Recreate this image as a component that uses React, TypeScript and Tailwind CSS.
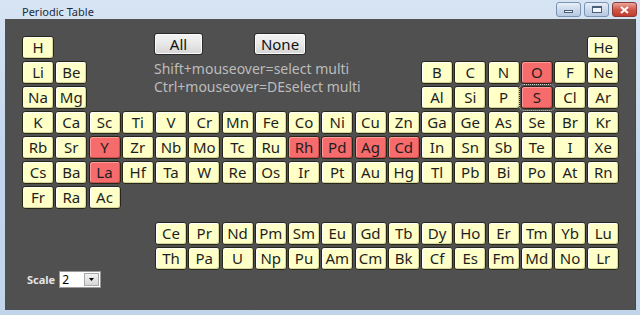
import React from "react";

const MAIN: (string | null)[][] = [
  ["H", null, null, null, null, null, null, null, null, null, null, null, null, null, null, null, null, "He"],
  ["Li", "Be", null, null, null, null, null, null, null, null, null, null, "B", "C", "N", "O", "F", "Ne"],
  ["Na", "Mg", null, null, null, null, null, null, null, null, null, null, "Al", "Si", "P", "S", "Cl", "Ar"],
  ["K", "Ca", "Sc", "Ti", "V", "Cr", "Mn", "Fe", "Co", "Ni", "Cu", "Zn", "Ga", "Ge", "As", "Se", "Br", "Kr"],
  ["Rb", "Sr", "Y", "Zr", "Nb", "Mo", "Tc", "Ru", "Rh", "Pd", "Ag", "Cd", "In", "Sn", "Sb", "Te", "I", "Xe"],
  ["Cs", "Ba", "La", "Hf", "Ta", "W", "Re", "Os", "Ir", "Pt", "Au", "Hg", "Tl", "Pb", "Bi", "Po", "At", "Rn"],
  ["Fr", "Ra", "Ac", null, null, null, null, null, null, null, null, null, null, null, null, null, null, null],
];

const LANTH = ["Ce", "Pr", "Nd", "Pm", "Sm", "Eu", "Gd", "Tb", "Dy", "Ho", "Er", "Tm", "Yb", "Lu"];
const ACT = ["Th", "Pa", "U", "Np", "Pu", "Am", "Cm", "Bk", "Cf", "Es", "Fm", "Md", "No", "Lr"];

const SELECTED = new Set(["O", "S", "Y", "La", "Rh", "Pd", "Ag", "Cd"]);
const FOCUSED = "S";

const font = { fontFamily: '"Noto Sans", "Open Sans", sans-serif' };

// one element box
function Cell({ sym }: { sym: string }) {
  const sel = SELECTED.has(sym);
  return (
    <div
      className={`w-[32px] h-[23px] flex items-center justify-center rounded-[3px] border border-[#262619] text-[15px] leading-none text-[#1e1e1e] ${
        sel
          ? "bg-[#f66b6b] shadow-[inset_1px_1px_0_#ff9a9a,inset_-1px_-1px_0_#c85050]"
          : "bg-[#ffffc8] shadow-[inset_1px_1px_0_#ffffff,inset_-1px_-1px_0_#d6d69c]"
      } ${sym === FOCUSED ? "outline outline-1 outline-dotted outline-[#c8c8c8] outline-offset-[1px]" : ""}`}
    >
      <span className="-mt-[1px]">{sym}</span>
    </div>
  );
}

function WinButton({ kind }: { kind: "min" | "max" | "close" }) {
  if (kind === "close") {
    return (
      <div className="w-[25px] h-[15px] rounded-[3px] border border-[#8a3a32] bg-gradient-to-b from-[#e8a69c] via-[#d0574a] to-[#c23a2c] flex items-center justify-center">
        <svg width="9" height="8" viewBox="0 0 9 8">
          <path d="M1 1 L8 7 M8 1 L1 7" stroke="#ffffff" strokeWidth="2" />
        </svg>
      </div>
    );
  }
  return (
    <div className="w-[25px] h-[15px] rounded-[3px] border border-[#7b93b3] bg-gradient-to-b from-[#e9f0f9] via-[#cbd9ea] to-[#b7cae2] flex items-center justify-center">
      {kind === "min" ? (
        <div className="w-[9px] h-[3px] mt-[3px] bg-[#f4f7fb] border border-[#4b5e78]" />
      ) : (
        <div className="w-[10px] h-[7px] bg-[#f4f7fb] border border-[#4b5e78] border-t-[2px]" />
      )}
    </div>
  );
}

export default function App() {
  return (
    <div
      className="w-[640px] h-[315px] bg-gradient-to-b from-[#d7e4f3] via-[#c4d7ed] to-[#c1d4ea] flex flex-col overflow-hidden"
      style={font}
    >
      {/* title bar */}
      <div className="h-[19px] flex items-center justify-between">
        <span className="pl-[22px] text-[11px] text-[#1b2a3e] leading-none mt-[4px]">Periodic Table</span>
        <div className="flex gap-[3px] pr-[3px] self-start mt-[2px]">
          <WinButton kind="min" />
          <WinButton kind="max" />
          <WinButton kind="close" />
        </div>
      </div>

      {/* client area */}
      <div className="ml-[5px] mr-[4px] h-[291px] bg-[#505050] border-r border-[#464646] pl-[17px] pt-[17px]">
        <div className="grid grid-cols-[repeat(18,33.25px)] grid-rows-[repeat(7,23px)] gap-y-[2px]">
          {MAIN.map((row, r) =>
            row.map((sym, c) =>
              sym ? (
                <div key={`${r}-${c}`} style={{ gridRow: r + 1, gridColumn: c + 1 }}>
                  <Cell sym={sym} />
                </div>
              ) : null
            )
          )}

          {/* controls in the gap of the table */}
          <div className="col-start-5 col-span-8 row-start-1 row-span-3 flex flex-col -mt-[3px] -ml-[1px]">
            <div className="flex">
              <button className="w-[49px] h-[22px] rounded-[3px] border border-[#2a2a2a] bg-gradient-to-b from-[#f4f4f4] via-[#e8e8e8] to-[#d4d4d4] shadow-[inset_0_0_0_1px_#fcfcfc] text-[15px] leading-none text-[#111]">
                All
              </button>
              <button className="ml-[51px] w-[52px] h-[22px] rounded-[3px] border border-[#2a2a2a] bg-gradient-to-b from-[#f4f4f4] via-[#e8e8e8] to-[#d4d4d4] shadow-[inset_0_0_0_1px_#fcfcfc] text-[15px] leading-none text-[#111]">
                None
              </button>
            </div>
            <div className="mt-[5px] text-[14px] leading-[18px] text-[#bcbcbc]">
              <div>Shift+mouseover=select multi</div>
              <div>Ctrl+mouseover=DEselect multi</div>
            </div>
          </div>
        </div>

        {/* lanthanides / actinides + scale */}
        <div className="mt-[13px] grid grid-cols-[repeat(18,33.25px)] grid-rows-[23px_23px_auto] gap-y-[2px]">
          {LANTH.map((sym, i) => (
            <div key={sym} style={{ gridRow: 1, gridColumn: i + 5 }}>
              <Cell sym={sym} />
            </div>
          ))}
          {ACT.map((sym, i) => (
            <div key={sym} style={{ gridRow: 2, gridColumn: i + 5 }}>
              <Cell sym={sym} />
            </div>
          ))}
          <div className="row-start-3 col-start-1 col-span-4 flex items-center -mt-[1px] pl-[5px]">
            <span className="text-[11px] font-bold text-[#e4e4e4] leading-none">Scale</span>
            <div className="ml-[4px] w-[42px] h-[17px] bg-white border border-[#9a9a9a] flex items-stretch">
              <span className="flex-1 text-[12px] leading-[15px] text-black pl-[2px]">2</span>
              <div className="w-[15px] m-[1px] bg-gradient-to-b from-[#f2f2f2] to-[#d6d6d6] border border-[#a8a8a8] flex items-center justify-center">
                <svg width="5" height="3" viewBox="0 0 5 3">
                  <path d="M0 0 L5 0 L2.5 3 Z" fill="#000" />
                </svg>
              </div>
            </div>
          </div>
        </div>
      </div>
    </div>
  );
}
